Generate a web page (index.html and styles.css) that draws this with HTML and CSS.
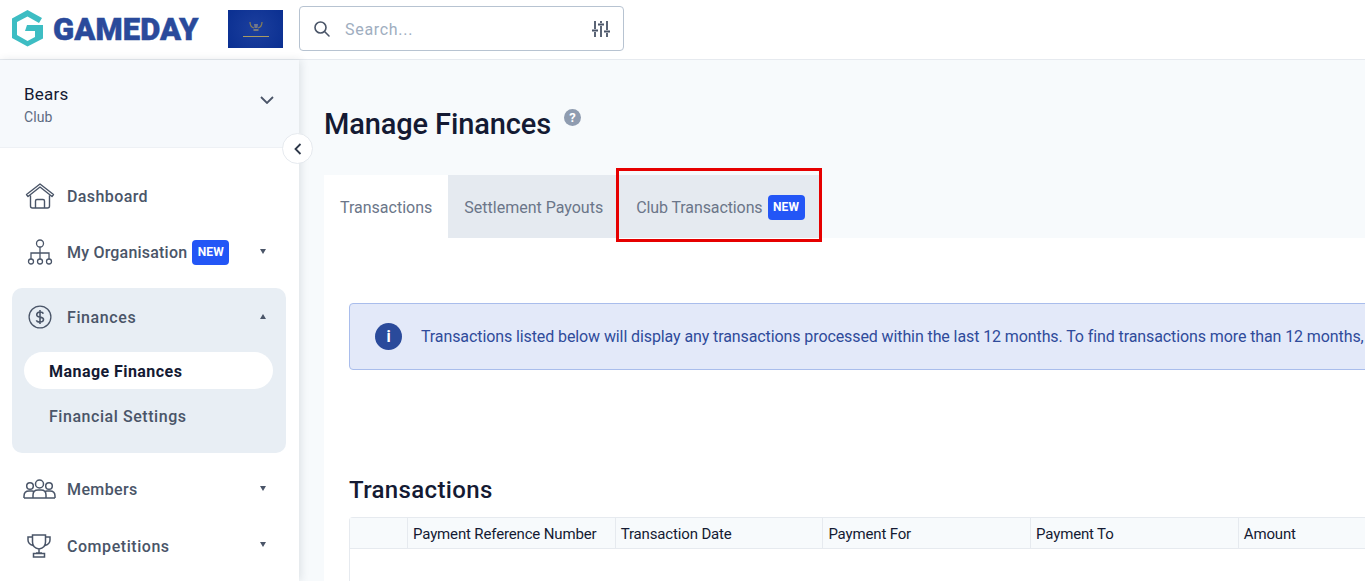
FILE: index.html
```html
<!DOCTYPE html>
<html lang="en">
<head>
  <meta charset="UTF-8" />
  <meta name="viewport" content="width=device-width, initial-scale=1.0" />
  <title>Manage Finances</title>
  <link rel="stylesheet" href="styles.css">
</head>
<body>
  <header class="topbar">
    <div class="logo">
      <svg class="logo-mark" viewBox="1 0 31 37" width="31" height="37">
        <path fill="#3dbdc3" d="M16.500 0 31 8l-3 5-11.500-6.500L6 12v13l10.500 6 7.500-4v-6H14l2-6h16v13.500l-15.500 8L1 28V8.500z"></path>
      </svg>
      <span class="logo-text">GAMEDAY</span>
    </div>
    <div class="flag">
      <svg viewBox="0 0 18 12" width="18" height="12">
        <path d="M3 1q0 5 4 6M15 1q0 5-4 6" fill="none" stroke="#8a7f55" stroke-width="1.200"></path>
        <path d="M7 3h4l-.5 4h-3z" fill="#6f7690"></path>
        <path d="M6.500 9h5" stroke="#b9a566" stroke-width="1.200"></path>
      </svg>
      <span class="flag-line"></span>
    </div>
    <div class="search">
      <svg viewBox="0 0 18 18" width="18" height="18">
        <circle cx="7.500" cy="7.500" r="5.500" fill="none" stroke="#4a5568" stroke-width="1.600"></circle>
        <path d="M11.800 11.800 16 16" stroke="#4a5568" stroke-width="1.600" stroke-linecap="round"></path>
      </svg>
      <span class="search-text">Search...</span>
      <svg viewBox="0 0 20 20" width="20" height="20">
        <path d="M4 2v8M4 13v5M10 2v2M10 7v11M16 2v9M16 14v4M1 11.500h6M7 5.500h6M13 12.500h6" stroke="#4a5568" stroke-width="1.800" fill="none"></path>
      </svg>
    </div>
  </header>

  <div class="layout">
    <aside class="sidebar">
      <div class="club">
        <div>
          <div class="club-name">Bears</div>
          <div class="club-type">Club</div>
        </div>
        <svg class="club-arrow" viewBox="0 0 14 8" width="14" height="8"><path d="M1 1l6 6 6-6" fill="none" stroke="#4a5568" stroke-width="1.800"></path></svg>
      </div>
      <button class="collapse">
        <svg viewBox="0 0 8 12" width="8" height="12"><path d="M6.500 1 1.500 6l5 5" fill="none" stroke="#2d3748" stroke-width="1.800"></path></svg>
      </button>

      <nav class="nav">
        <a class="nav-item nav-dashboard">
          <svg class="nav-icon" viewBox="0 0 30 26" width="30" height="26">
            <path d="M1.500 11.500 15 1l13.500 10.500-1.500 2L15 4 3 13.500zM5.500 12.500V23q0 2 2 2h15q2 0 2-2V12.500M10.500 25v-7q0-1.500 1.500-1.500h6q1.500 0 1.500 1.500v7" fill="none" stroke="#4a5568" stroke-width="1.400" stroke-linejoin="round"></path>
          </svg>
          <span>Dashboard</span>
        </a>
        <a class="nav-item nav-org">
          <svg class="nav-icon" viewBox="0 0 26 26" width="26" height="26">
            <circle cx="13" cy="4.500" r="3.500" fill="none" stroke="#4a5568" stroke-width="1.300"></circle>
            <circle cx="4" cy="22.500" r="2.500" fill="none" stroke="#4a5568" stroke-width="1.300"></circle>
            <circle cx="13" cy="22.500" r="2.500" fill="none" stroke="#4a5568" stroke-width="1.300"></circle>
            <circle cx="22" cy="22.500" r="2.500" fill="none" stroke="#4a5568" stroke-width="1.300"></circle>
            <path d="M13 8v12M4 20v-6h18v6" fill="none" stroke="#4a5568" stroke-width="1.300"></path>
          </svg>
          <span>My Organisation</span>
          <span class="badge">NEW</span>
          <span class="caret"></span>
        </a>
        <div class="nav-group">
          <a class="nav-item nav-finances">
            <svg class="nav-icon" viewBox="0 0 26 26" width="24" height="24">
              <circle cx="13" cy="13" r="11.800" fill="none" stroke="#4a5568" stroke-width="1.400"></circle>
              <path d="M16.500 9.500Q16 7.500 13 7.500t-3.500 2.500 3.500 3 3.800 3-3.800 2.500-3.800-2M13 5.500v15" fill="none" stroke="#4a5568" stroke-width="1.700"></path>
            </svg>
            <span>Finances</span>
            <span class="caret caret-up"></span>
          </a>
          <a class="sub-item sub-active">Manage Finances</a>
          <a class="sub-item">Financial Settings</a>
        </div>
        <a class="nav-item nav-members">
          <svg class="nav-icon" viewBox="0 0 33 20" width="33" height="20">
            <g fill="none" stroke="#4a5568" stroke-width="1.500">
              <circle cx="16.500" cy="5" r="4"></circle>
              <circle cx="7" cy="7" r="3.300"></circle>
              <circle cx="26" cy="7" r="3.300"></circle>
              <path d="M1 19v-2q0-5 5-5h3q1.500 0 2.500 1M32 19v-2q0-5-5-5h-3q-1.500 0-2.500 1M10 19v-3q0-5 5-5h3q5 0 5 5v3M1 19h31"></path>
            </g>
          </svg>
          <span>Members</span>
          <span class="caret"></span>
        </a>
        <a class="nav-item nav-comps">
          <svg class="nav-icon" viewBox="0 0 24 24" width="24" height="24">
            <path d="M5.500 1h13v7q0 6-6.500 7-6.500-1-6.500-7zM5.500 3H1v3q0 4 5 5.500M18.500 3H23v3q0 4-5 5.500M12 15v4M9 19h6M6.500 19.500h11V23h-11z" fill="none" stroke="#4a5568" stroke-width="1.500"></path>
          </svg>
          <span>Competitions</span>
          <span class="caret"></span>
        </a>
      </nav>
    </aside>

    <main class="main">
      <div class="page-head">
        <h1>Manage Finances</h1>
        <span class="help">?</span>
      </div>
      <div class="tabs">
        <a class="tab tab-active">Transactions</a>
        <a class="tab">Settlement Payouts</a>
        <a class="tab tab-club">Club Transactions <span class="badge badge-tab">NEW</span></a>
        <span class="highlight"></span>
      </div>
      <section class="panel">
        <div class="alert">
          <span class="alert-icon">i</span>
          <span>Transactions listed below will display any transactions processed within the last 12 months. To find transactions more than 12 months,</span>
        </div>
        <h2>Transactions</h2>
        <div class="table">
          <div class="table-head">
            <div class="col col-first"></div>
            <div class="col">Payment Reference Number</div>
            <div class="col">Transaction Date</div>
            <div class="col">Payment For</div>
            <div class="col">Payment To</div>
            <div class="col">Amount</div>
          </div>
        </div>
      </section>
    </main>
  </div>
</body>
</html>
```

FILE: styles.css
```css
* {
  box-sizing: border-box;
}
html, body {
  height: 100%;
}
body {
  font-family: Roboto, Arial, sans-serif;
  font-size: 16px;
  margin: 0;
  overflow: hidden;
  background-color: #fff;
  color: #4a5568;
}
.topbar {
  display: flex;
  align-items: center;
  height: 60px;
  padding-left: 12px;
  background-color: #fff;
  border-bottom: 1px solid #e6eaef;
}
.logo {
  display: flex;
  align-items: center;
  width: 216px;
  margin-top: -2px;
}
.logo-mark {
  flex: none;
}
.logo-text {
  margin-left: 10px;
  padding-top: 2px;
  font-weight: 900;
  font-size: 31px;
  letter-spacing: 0.1px;
  color: #2a4a9b;
  -webkit-text-stroke: 0.5px #2a4a9b;
}
.flag {
  display: flex;
  flex-direction: column;
  align-items: center;
  justify-content: center;
  gap: 3px;
  width: 55px;
  height: 38px;
  margin-top: -1px;
  background: radial-gradient(circle, #1c3f9e 0%, #0a2f91 100%);
}
.flag-line {
  width: 26px;
  height: 1px;
  background-color: #a89a63;
}
.search {
  display: flex;
  align-items: center;
  justify-content: space-between;
  width: 325px;
  height: 45px;
  margin-left: 16px;
  margin-top: -2px;
  padding: 0 12px 0 13px;
  border: 1px solid #b7c3d1;
  border-radius: 4px;
}
.search-text {
  flex: 1;
  margin-left: 14px;
  padding-top: 2px;
  letter-spacing: 0.7px;
  color: #a0aec0;
}
.layout {
  display: flex;
  height: 521px;
}
.sidebar {
  position: relative;
  flex: none;
  width: 299px;
  background-color: #fff;
  box-shadow: 2px 0 8px rgba(45, 55, 72, 0.12);
  z-index: 1;
}
.club {
  display: flex;
  align-items: center;
  justify-content: space-between;
  height: 88px;
  padding: 1px 25px 0 24px;
  background-color: #f6f9fc;
  border-bottom: 1px solid #eef1f5;
}
.club-arrow {
  margin-top: -9px;
}
.club-name {
  font-size: 17px;
  letter-spacing: 0.2px;
  color: #141a33;
}
.club-type {
  margin-top: 5px;
  font-size: 14px;
  letter-spacing: 0.1px;
  color: #5d6b82;
}
.collapse {
  position: absolute;
  top: 73px;
  left: 282px;
  display: flex;
  align-items: center;
  justify-content: center;
  width: 31px;
  height: 31px;
  padding: 0;
  border: 1px solid #e6eaef;
  border-radius: 50%;
  background-color: #fff;
}
.nav {
  display: flex;
  flex-direction: column;
  padding: 20px 13px 0 12px;
}
.nav-item {
  display: flex;
  align-items: center;
  height: 56px;
  font-weight: 500;
  letter-spacing: 0.4px;
  position: relative;
  padding-left: 12px;
}
.nav-icon {
  flex: none;
}
.nav-dashboard .nav-icon {
  margin: 0 12px 0 1px;
}
.nav-org {
  letter-spacing: 0.2px;
}
.nav-org .nav-icon {
  margin: 0 14px 0 3px;
}
.nav-finances {
  letter-spacing: 0.6px;
}
.nav-finances .nav-icon {
  margin: 0 15px 0 4px;
}
.nav-members .nav-icon {
  margin: 0 11px 0 -1px;
}
.nav-comps {
  padding-top: 2px;
  letter-spacing: 0.55px;
}
.nav-comps .nav-icon {
  margin: 0 16px 0 3px;
}
.nav-group {
  margin-top: 8px;
  height: 165px;
  padding: 0 13px 0 12px;
  background-color: #e8eef4;
  border-radius: 10px;
}
.nav-finances {
  height: 58px;
  padding-left: 0;
  margin-bottom: 6px;
}
.nav-members {
  margin-top: 8px;
}
.sub-item {
  display: flex;
  align-items: center;
  height: 37px;
  padding: 1px 0 0 25px;
  font-weight: 500;
  letter-spacing: 0.55px;
  margin-bottom: 8px;
}
.sub-active {
  background-color: #fff;
  border-radius: 19px;
  color: #141a33;
  font-weight: 700;
  letter-spacing: 0.45px;
}
.badge {
  margin-left: 5px;
  padding: 0 5.500px;
  height: 25px;
  line-height: 25px;
  font-size: 12px;
  font-weight: 700;
  letter-spacing: 0.1px;
  color: #fff;
  background-color: #2356f6;
  border-radius: 4px;
}
.caret {
  position: absolute;
  right: 20px;
  top: 50%;
  margin-top: -3px;
  border-left: 3.500px solid transparent;
  border-right: 3.500px solid transparent;
  border-top: 5px solid #4a5568;
}
.caret-up {
  right: 7px;
  border-top: 0;
  border-bottom: 5px solid #4a5568;
}
.main {
  flex: 1;
  min-width: 0;
  overflow: hidden;
  background-color: #f7fafc;
}
.page-head {
  display: flex;
  height: 115px;
  padding: 44px 0 0 25px;
}
h1 {
  margin: 0;
  font-size: 29px;
  line-height: 40px;
  font-weight: 500;
  letter-spacing: -0.12px;
  color: #141a33;
}
.help {
  width: 17px;
  height: 17px;
  margin: 5px 0 0 13px;
  border-radius: 50%;
  text-align: center;
  font-size: 13px;
  line-height: 17px;
  font-weight: 700;
  color: #fff;
  background-color: #8f9cb0;
}
.tabs {
  position: relative;
  display: flex;
  height: 63px;
  padding-left: 25px;
}
.tab {
  display: flex;
  align-items: center;
  padding: 2px 16px 0;
  color: #6b7689;
  background-color: #e5eaf0;
}
.tab-active {
  background-color: #fff;
}
.tab-club {
  padding-left: 17px;
  letter-spacing: -0.1px;
}
.badge-tab {
  margin-left: 5px;
  margin-top: -1px;
}
.highlight {
  position: absolute;
  left: 317px;
  top: -7px;
  width: 206px;
  height: 74px;
  border: 3px solid #e60000;
}
.panel {
  height: 343px;
  margin-left: 25px;
  padding: 65px 0 0 25px;
  background-color: #fff;
}
.alert {
  display: flex;
  align-items: center;
  width: 1300px;
  height: 67px;
  padding-left: 25px;
  white-space: nowrap;
  letter-spacing: -0.1px;
  color: #2f4b9b;
  background-color: #e3e9f9;
  border: 1px solid #a9bdec;
  border-radius: 4px;
}
.alert-icon {
  flex: none;
  width: 27px;
  height: 27px;
  margin-right: 19px;
  border-radius: 50%;
  text-align: center;
  line-height: 27px;
  font-weight: 700;
  color: #fff;
  background-color: #2a4a9b;
}
h2 {
  margin: 105px 0 12px;
  font-size: 24px;
  line-height: 30px;
  font-weight: 500;
  letter-spacing: 0.35px;
  color: #141a33;
}
.table {
  width: 1200px;
  height: 100px;
  border-left: 1px solid #e6eaef;
  border-top: 1px solid #e6eaef;
  border-radius: 4px 0 0 0;
}
.table-head {
  display: flex;
  height: 31px;
  background-color: #f7fafc;
  border-bottom: 1px solid #e6eaef;
}
.col {
  width: 207.700px;
  padding-left: 5px;
  font-size: 15px;
  letter-spacing: -0.15px;
  line-height: 33px;
  color: #141a33;
  border-left: 1px solid #e6eaef;
}
.col-first {
  width: 57px;
  border-left: 0;
}
```
